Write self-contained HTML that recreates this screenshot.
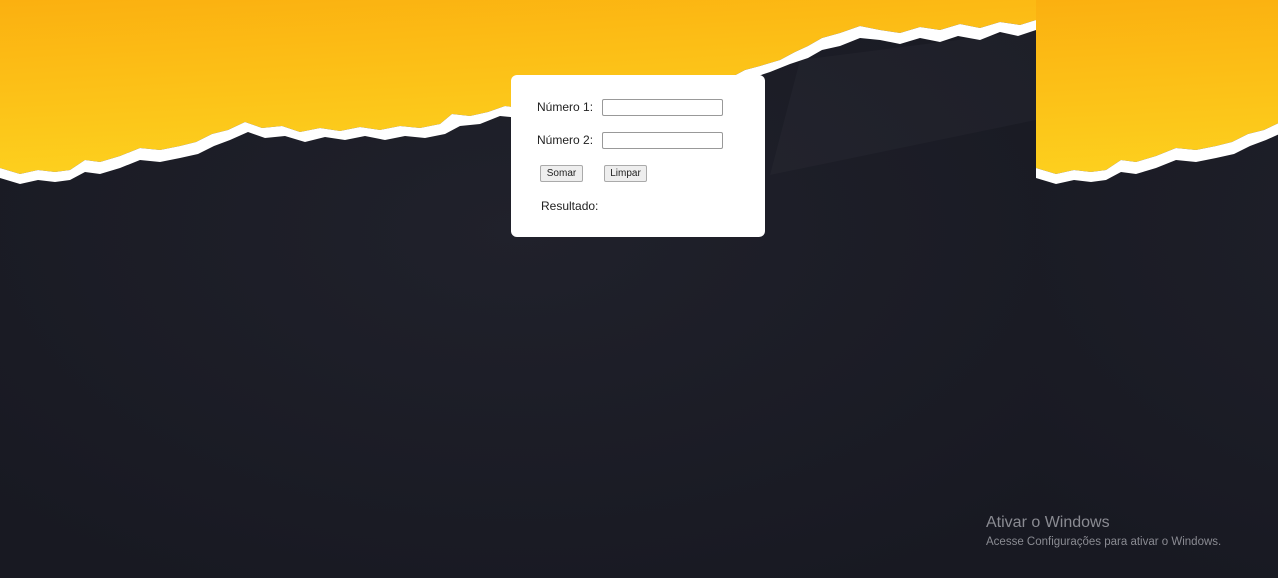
<!DOCTYPE html>
<html><head><meta charset="utf-8"><style>
html,body{margin:0;padding:0;width:1278px;height:578px;overflow:hidden;background:#1c1d26;font-family:"Liberation Sans",sans-serif}
svg.bg{position:absolute;left:0;top:0}
.card{position:absolute;left:511px;top:75px;width:254px;height:162px;background:#fff;border-radius:6px;font-size:12px;color:#222}
.lbl{position:absolute;left:26px}
.inp{position:absolute;left:91px;width:119px;height:15px;border:1px solid #999;border-radius:2px;background:#fff}
.btn{position:absolute;top:90px;height:15px;border:1px solid #aaa;background:#eee;border-radius:2px;font-size:10px;line-height:15px;text-align:center;color:#222}
.win{position:absolute;left:986px;color:#8a8b92}
</style></head><body>
<svg class="bg" width="1278" height="578" viewBox="0 0 1278 578">
<defs>
<linearGradient id="y" x1="0" y1="0" x2="0.3" y2="1"><stop offset="0" stop-color="#fbb010"/><stop offset="1" stop-color="#fdd21f"/></linearGradient>
<radialGradient id="d" cx="0.5" cy="0.4" r="0.7"><stop offset="0" stop-color="#20212b"/><stop offset="1" stop-color="#181922"/></radialGradient>
<g id="tile">
<rect width="1036" height="578" fill="url(#d)"/>
<path d="M0 0H1036V20L1020 25L1000 22L980 28L960 24L940 30L920 27L900 33L880 30L860 26L840 33L822 38L808 46L795 52L780 60L760 66L745 70L730 78L712 84L695 88L678 92L660 94L640 98L620 96L600 99L580 102L560 100L540 104L520 108L505 106L488 112L470 116L452 114L440 124L420 128L400 126L380 130L360 127L340 131L320 128L300 132L282 126L262 128L245 122L228 130L212 134L196 142L180 146L160 150L140 148L120 156L100 162L85 160L70 170L55 172L38 170L20 174L0 168Z" fill="url(#y)"/>
<path d="M0 168L20 174L38 170L55 172L70 170L85 160L100 162L120 156L140 148L160 150L180 146L196 142L212 134L228 130L245 122L262 128L282 126L300 132L320 128L340 131L360 127L380 130L400 126L420 128L440 124L452 114L470 116L488 112L505 106L520 108L540 104L560 100L580 102L600 99L620 96L640 98L660 94L678 92L695 88L712 84L730 78L745 70L760 66L780 60L795 52L808 46L822 38L840 33L860 26L880 30L900 33L920 27L940 30L960 24L980 28L1000 22L1020 25L1036 20V30L1018 36L1000 32L980 40L958 36L940 42L920 38L900 44L880 40L860 38L840 46L822 50L808 58L790 64L770 72L752 78L735 88L718 94L700 98L680 102L660 104L640 108L620 106L600 110L580 112L560 110L540 114L520 118L500 116L480 124L460 126L445 134L425 138L405 136L385 140L365 136L345 140L325 137L305 142L285 136L265 138L248 132L230 140L214 146L198 154L180 158L160 162L140 160L120 168L100 174L85 172L70 180L55 182L38 180L20 184L0 178Z" fill="#fff"/>
<path d="M770 175L800 60L1036 30V120Z" fill="#fff" opacity="0.025"/>
</g>
</defs>
<use href="#tile"/>
<use href="#tile" x="1036"/>
</svg>
<div class="card">
<div class="lbl" style="top:25px">Número 1:</div><div class="inp" style="top:24px"></div>
<div class="lbl" style="top:58px">Número 2:</div><div class="inp" style="top:57px"></div>
<div class="btn" style="left:29px;width:41px">Somar</div>
<div class="btn" style="left:93px;width:41px">Limpar</div>
<div class="lbl" style="left:30px;top:124px">Resultado:</div>
</div>
<div class="win" style="top:514px;font-size:16px">Ativar o Windows</div>
<div class="win" style="top:536px;font-size:11.5px">Acesse Configurações para ativar o Windows.</div>
</body></html>
